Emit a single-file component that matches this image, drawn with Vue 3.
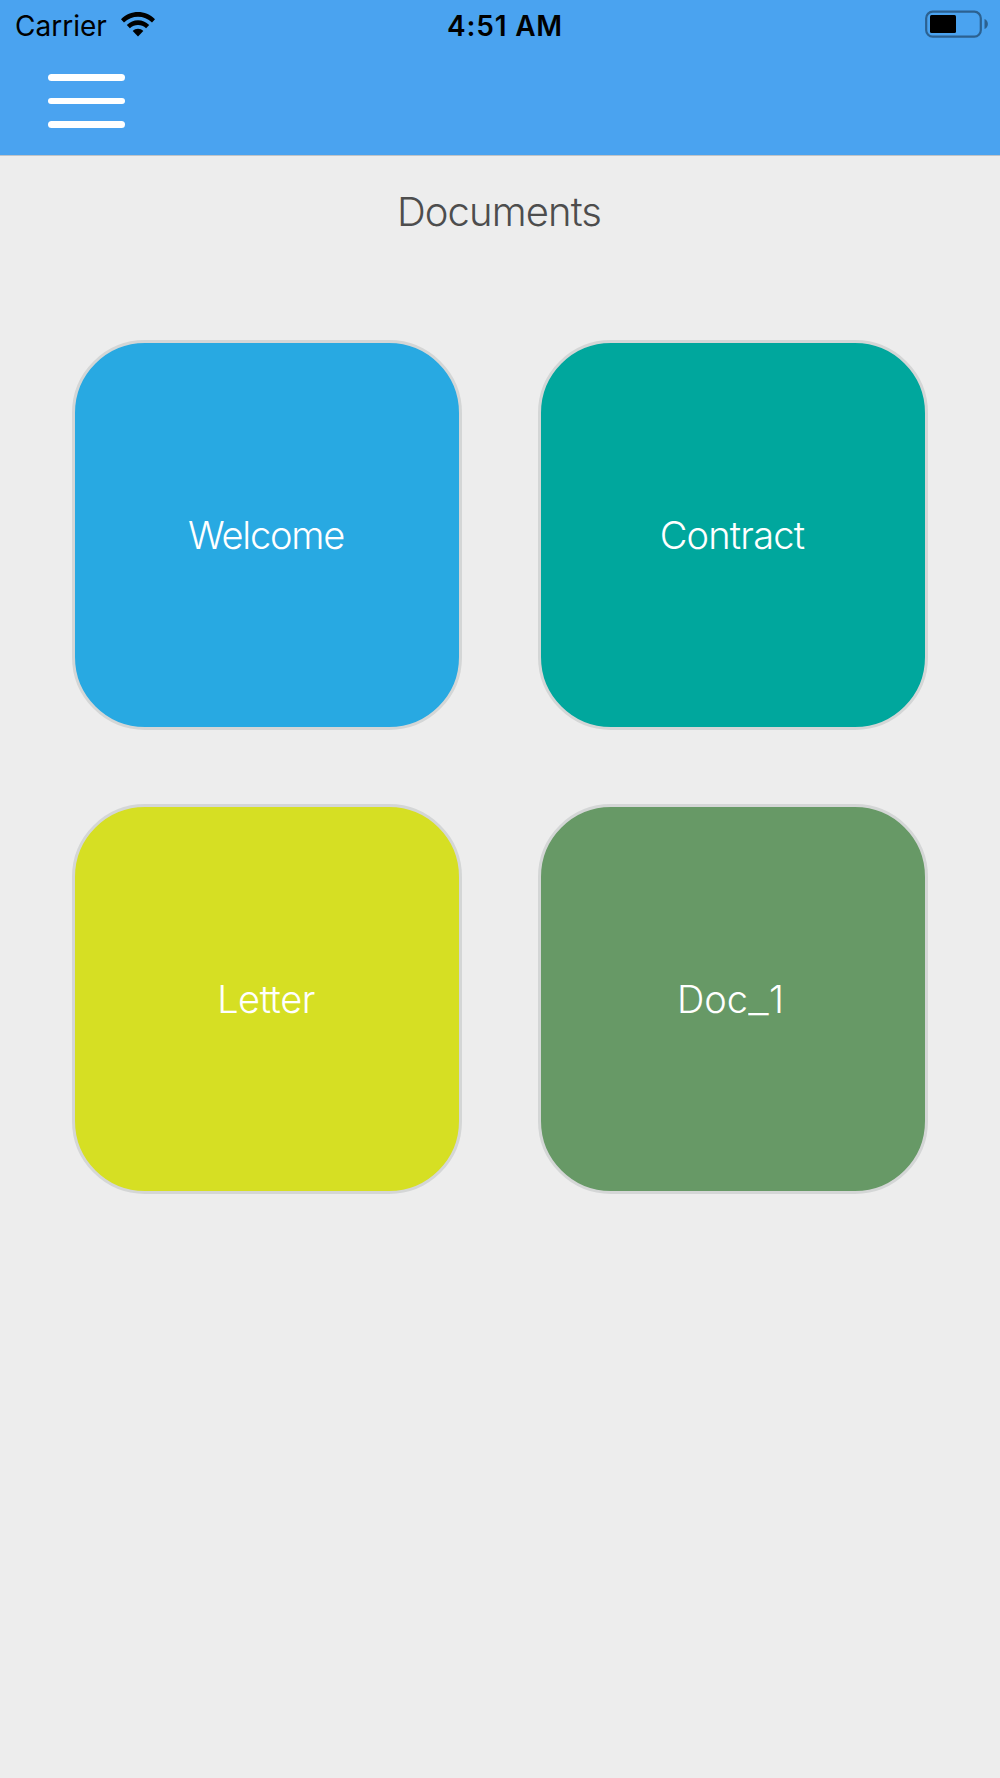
<script setup>
const documents = [
  { name: 'Welcome', theme: 'welcome' },
  { name: 'Contract', theme: 'contract' },
  { name: 'Letter', theme: 'letter' },
  { name: 'Doc_1', theme: 'doc' }
]
</script>

<template>
  <div class="screen">
    <header class="header">
      <div class="status-bar">
        <div class="carrier">
          <span class="carrier-name">Carrier</span>
          <svg class="wifi" width="34" height="25" viewBox="0 0 34 25">
            <path d="M0 7.2C9.5-2.4 24.5-2.4 34 7.2L31 10.4C23.2 2.8 10.8 2.8 3 10.4Z" />
            <path d="M5.8 13C12.1 6.6 21.9 6.6 28.2 13L25.1 16.2C20.4 11.8 13.6 11.8 8.9 16.2Z" />
            <path d="M11.7 19C14.7 16 19.3 16 22.3 19L17 24.5Z" />
          </svg>
        </div>
        <span class="time">4:51 AM</span>
        <svg class="battery" width="64" height="28" viewBox="0 0 64 28">
          <rect class="battery-case" x="1.2" y="1.7" width="54.6" height="25" rx="6.5" />
          <rect x="5" y="5" width="26" height="18" rx="1.5" />
          <path class="battery-cap" d="M59.5 9C64 10.5 64 17.5 59.5 19Z" />
        </svg>
      </div>
      <button class="menu-button" aria-label="Menu">
        <span class="menu-line"></span>
        <span class="menu-line"></span>
        <span class="menu-line"></span>
      </button>
    </header>

    <h1 class="title">Documents</h1>

    <main class="grid">
      <button
        v-for="doc in documents"
        :key="doc.name"
        :class="['tile', doc.theme]"
      >
        <template v-if="doc.name.includes('_')">
          {{ doc.name.split('_')[0] }}<span class="underscore">_</span>{{ doc.name.split('_')[1] }}
        </template>
        <template v-else>{{ doc.name }}</template>
      </button>
    </main>
  </div>
</template>

<style>
body {
  margin: 0;
  background-color: #ededed;
}
</style>

<style scoped>
.screen {
  min-height: 1778px;
  background-color: #ededed;
  font-family: Inter, "Liberation Sans", sans-serif;
}

.header {
  box-sizing: border-box;
  height: 156px;
  background-color: #4aa3f0;
  border-bottom: 1px solid #c0c4c8;
}

.status-bar {
  display: grid;
  grid-template-columns: 1fr auto 1fr;
  align-items: start;
  height: 50px;
  padding: 0 11px 0 15px;
  color: #000;
}

.carrier {
  display: flex;
  align-items: flex-start;
  gap: 14px;
}

.carrier-name {
  font-size: 28px;
  line-height: 52px;
}

.wifi {
  margin-top: 12px;
}

.time {
  padding-left: 6px;
  font-size: 28px;
  font-weight: 600;
  letter-spacing: 0.8px;
  line-height: 52px;
}

.battery {
  justify-self: end;
  margin-top: 10px;
}

.battery-case {
  fill: none;
  stroke: #2c6190;
  stroke-width: 2.2;
}

.battery-cap {
  fill: #2c6190;
}

.menu-button {
  display: flex;
  flex-direction: column;
  gap: 17px;
  width: 77px;
  margin: 24px 0 0 48px;
  padding: 0;
  border: 0;
  background: none;
}

.menu-line {
  height: 6.5px;
  border-radius: 4px;
  background-color: #fff;
}

.title {
  height: 112px;
  margin: 0;
  padding-right: 2px;
  color: #4d4d4d;
  font-size: 40px;
  font-weight: 300;
  letter-spacing: -0.9px;
  line-height: 112px;
  text-align: center;
}

.grid {
  display: grid;
  grid-template-columns: 390px 390px;
  grid-auto-rows: 390px;
  gap: 74px 76px;
  justify-content: center;
  padding-top: 72px;
}

.tile {
  box-sizing: border-box;
  padding: 0 2px 0 0;
  border: 3px solid #d4d6d6;
  border-radius: 73px;
  color: #fff;
  font-family: inherit;
  font-size: 38px;
  font-weight: 300;
}

.tile.welcome {
  background-color: #28a9e2;
  letter-spacing: -1.2px;
}

.tile.contract {
  background-color: #00a79d;
  letter-spacing: -0.8px;
}

.tile.letter {
  background-color: #d6df23;
  letter-spacing: -0.5px;
}

.tile.doc {
  padding-right: 5px;
  background-color: #679966;
}

.underscore {
  display: inline-block;
  margin: 0 2px;
  transform: scaleX(1.2);
}
</style>
